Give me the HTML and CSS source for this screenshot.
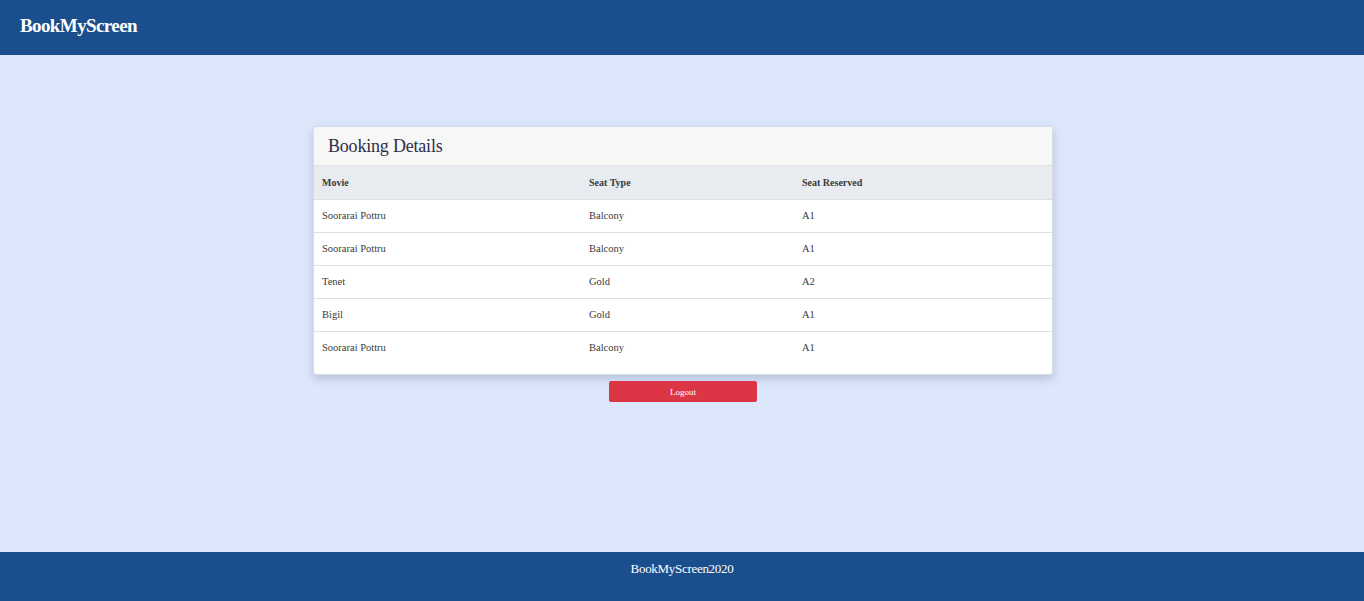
FILE: index.html
```html
<!DOCTYPE html>
<html lang="en">
<head>
<meta charset="utf-8">
<title>BookMyScreen</title>
<link rel="stylesheet" href="styles.css">
</head>
<body>
<header class="topbar">
  <span class="brand">BookMyScreen</span>
</header>
<main class="main">
  <section class="card">
    <div class="card-header">Booking Details</div>
    <div class="card-body">
      <table class="table">
        <thead>
          <tr><th class="c1">Movie</th><th class="c2">Seat Type</th><th class="c3">Seat Reserved</th></tr>
        </thead>
        <tbody>
          <tr><td>Soorarai Pottru</td><td>Balcony</td><td>A1</td></tr>
          <tr><td>Soorarai Pottru</td><td>Balcony</td><td>A1</td></tr>
          <tr><td>Tenet</td><td>Gold</td><td>A2</td></tr>
          <tr><td>Bigil</td><td>Gold</td><td>A1</td></tr>
          <tr><td>Soorarai Pottru</td><td>Balcony</td><td>A1</td></tr>
        </tbody>
      </table>
    </div>
  </section>
  <button class="logout" type="button">Logout</button>
</main>
<footer class="footer">BookMyScreen2020</footer>
</body>
</html>
```
FILE: styles.css
```css
* { box-sizing: border-box; }
html, body { height: 100%; }
body {
  margin: 0;
  font-family: "Liberation Serif", "Times New Roman", serif;
  background: #dde7fc;
  color: #212529;
  display: flex;
  flex-direction: column;
}
.topbar {
  height: 55px;
  background: #1a4e8d;
  display: flex;
  align-items: center;
  padding-left: 20px;
  flex-shrink: 0;
}
.brand {
  color: #fff;
  font-weight: bold;
  font-size: 19px;
  letter-spacing: -0.6px;
  margin-top: -4px;
}
.main {
  flex: 1;
  display: flex;
  flex-direction: column;
  align-items: center;
  padding-top: 71px;
  padding-left: 2px;
}
.card {
  width: 740px;
  background: #fff;
  border: 1px solid #d9dde3;
  border-radius: 3px;
  box-shadow: 0 4px 10px rgba(60, 80, 120, 0.25);
}
.card-header {
  height: 39px;
  background: #f7f7f7;
  border-bottom: 1px solid #dfe1e4;
  padding: 0 14px;
  display: flex;
  align-items: center;
  font-size: 18px;
  letter-spacing: -0.2px;
  color: #2e2e48;
  border-radius: 3px 3px 0 0;
}
.card-body { padding-bottom: 10px; }
.table {
  width: 100%;
  border-collapse: collapse;
  font-size: 10.5px;
  color: #3a3a3a;
}
.table th {
  background: #e8ebef;
  text-align: left;
  font-weight: bold;
  font-size: 10px;
  height: 33px;
  padding: 0 8px;
  color: #3a3a3a;
}
.table td {
  height: 33px;
  padding: 0 8px;
  border-top: 1px solid #dcdfe3;
}
.c1 { width: 267px; }
.c2 { width: 213px; }
.logout {
  margin-top: 6px;
  width: 148px;
  height: 21px;
  background: #dc3545;
  color: #fff;
  border: none;
  border-radius: 2px;
  font-family: inherit;
  font-size: 9px;
  padding: 0;
}
.footer {
  height: 49px;
  background: #1a4e8d;
  color: #fff;
  text-align: center;
  font-size: 13px;
  letter-spacing: -0.3px;
  padding-top: 9px;
  flex-shrink: 0;
}
```
